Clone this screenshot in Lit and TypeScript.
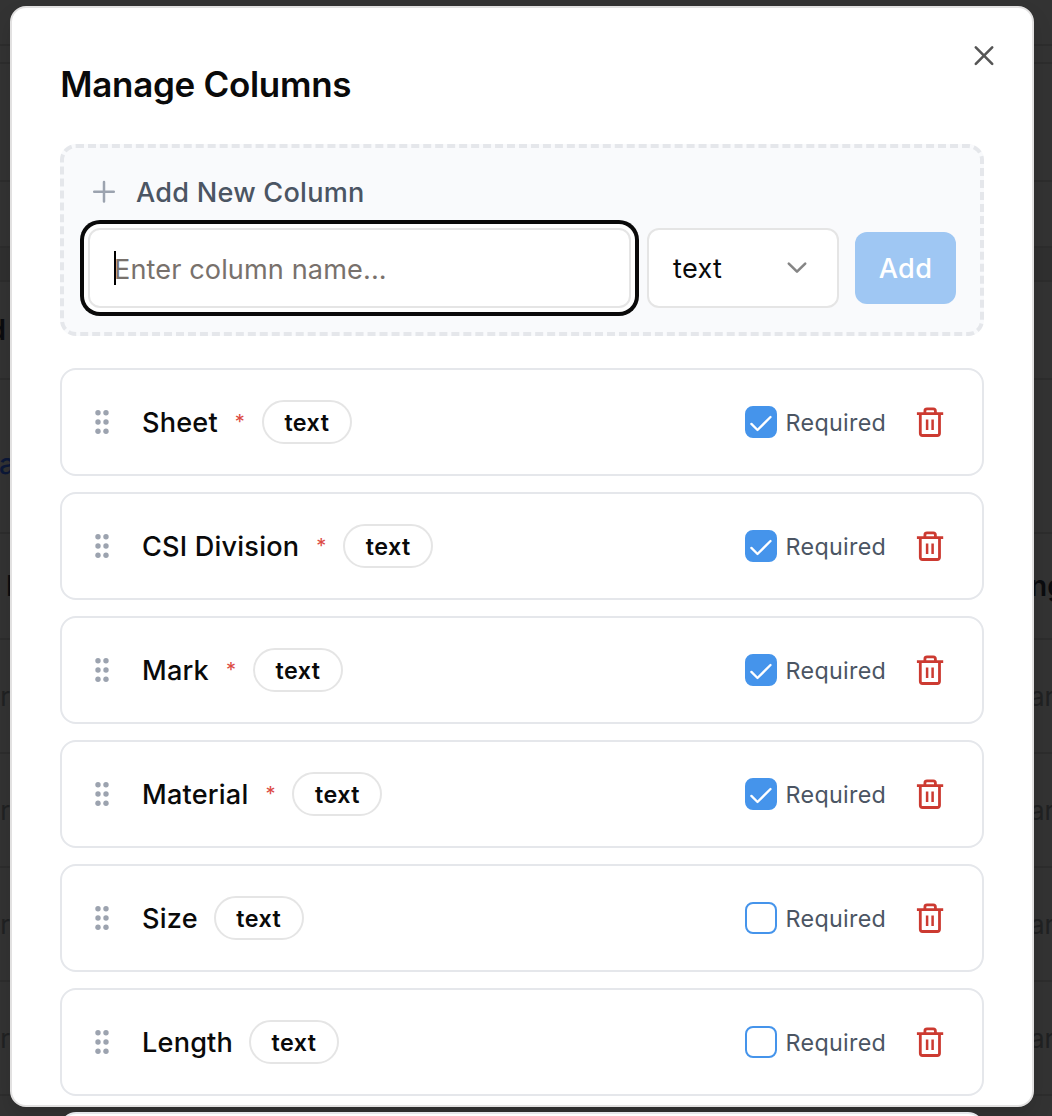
import { LitElement, html, css, svg, nothing } from "lit";
import { customElement, property, state } from "lit/decorators.js";

interface Column {
  name: string;
  type: string;
  required: boolean;
}

const plusIcon = svg`<svg width="32" height="32" viewBox="0 0 32 32" fill="none" stroke="currentColor" stroke-width="2.5" stroke-linecap="round"><path d="M6.2 15.7H25.8M16 6V25.5"/></svg>`;
const closeIcon = svg`<svg width="32" height="32" viewBox="0 0 32 32" fill="none" stroke="currentColor" stroke-width="2.6" stroke-linecap="round"><path d="M7.8 7.4L24.2 23.8M24.2 7.4L7.8 23.8"/></svg>`;
const chevronIcon = svg`<svg width="32" height="32" viewBox="0 0 32 32" fill="none" stroke="currentColor" stroke-width="2.6" stroke-linecap="round" stroke-linejoin="round"><path d="M7.8 11.6L16 19.6L24.2 11.6"/></svg>`;
const checkIcon = svg`<svg width="32" height="32" viewBox="0 0 32 32" fill="none" stroke="currentColor" stroke-width="2.3" stroke-linecap="round" stroke-linejoin="round"><path d="M6.4 17.9L12.5 24L25.5 11"/></svg>`;
const gripIcon = svg`<svg width="32" height="32" viewBox="0 0 32 32" fill="currentColor"><circle cx="12" cy="6.7" r="2.7"/><circle cx="20" cy="6.7" r="2.7"/><circle cx="12" cy="16" r="2.7"/><circle cx="20" cy="16" r="2.7"/><circle cx="12" cy="25.3" r="2.7"/><circle cx="20" cy="25.3" r="2.7"/></svg>`;
const trashIcon = svg`<svg width="32" height="32" viewBox="0 0 32 32" fill="none" stroke="currentColor" stroke-width="2.8"><path d="M2.9 7.7H29.2M10.9 7.7V4.9Q10.9 2.8 13 2.8H19.3Q21.4 2.8 21.4 4.9V7.7M6.3 7.7V27.2Q6.3 29.5 8.6 29.5H23.2Q25.5 29.5 25.5 27.2V7.7"/><path stroke-width="2.5" d="M13.1 13.4V24M18.6 13.4V24"/></svg>`;

@customElement("column-row")
class ColumnRow extends LitElement {
  @property({ attribute: false }) column!: Column;

  static styles = css`
    :host { display: block; }
    .row {
      box-sizing: border-box;
      height: 108px;
      display: flex;
      align-items: center;
      padding: 0 24px;
      border: 2px solid #e5e7eb;
      border-radius: 16px;
      background: #fff;
    }
    svg { display: block; }
    .grip { color: #9ca3af; margin-right: 24px; }
    .info { flex: 1; display: flex; align-items: center; gap: 16px; }
    .name { font-size: 27.1px; font-weight: 500; line-height: 40px; color: #0a0a0a; letter-spacing: 0.2px; padding-top: 1px; }
    .star { width: 12px; font-size: 20px; line-height: 32px; color: #dc4a43; text-align: center; }
    .badge {
      box-sizing: border-box;
      width: 90px;
      height: 44px;
      display: flex;
      align-items: center;
      justify-content: center;
      border: 2px solid #e5e5e5;
      border-radius: 22px;
      font-size: 23.3px;
      letter-spacing: 0.45px;
      font-weight: 600;
      color: #0a0a0a;
    }
    .required { display: flex; align-items: center; gap: 8px; margin-right: 16px; }
    .label { box-sizing: border-box; width: 101px; padding: 2px 0 0 0.6px; font-size: 23.3px; letter-spacing: 0.3px; line-height: 32px; color: #4b5563; white-space: nowrap; }
    .box {
      box-sizing: border-box;
      width: 32px;
      height: 32px;
      border: 2px solid #4594eb;
      border-radius: 8px;
      color: #fff;
    }
    .checked { background: #4594eb; }
    .box svg { margin: -2px; }
    .remove { width: 56px; display: flex; justify-content: center; color: #cc3a31; }
  `;

  render() {
    const c = this.column;
    return html`<div class="row">
      <span class="grip">${gripIcon}</span>
      <div class="info">
        <span class="name">${c.name}</span>
        ${c.required ? html`<span class="star">*</span>` : nothing}
        <span class="badge">${c.type}</span>
      </div>
      <div class="required">
        <span class="box ${c.required ? "checked" : ""}">${c.required ? checkIcon : nothing}</span>
        <span class="label">Required</span>
      </div>
      <span class="remove">${trashIcon}</span>
    </div>`;
  }
}

@customElement("app-root")
class AppRoot extends LitElement {
  @state() private columns: Column[] = [
    { name: "Sheet", type: "text", required: true },
    { name: "CSI Division", type: "text", required: true },
    { name: "Mark", type: "text", required: true },
    { name: "Material", type: "text", required: true },
    { name: "Size", type: "text", required: false },
    { name: "Length", type: "text", required: false },
    { name: "", type: "", required: false },
  ];

  static styles = css`
    :host {
      display: block;
      position: relative;
      box-sizing: border-box;
      width: 1052px;
      height: 1116px;
      padding: 5.5px 18px 0 10px;
      overflow: hidden;
      background: #333;
      font-family: Inter, "Liberation Sans", sans-serif;
    }
    svg { display: block; }
    .backdrop { position: absolute; inset: 0; overflow: hidden; font-size: 26px; }
    .line {
      box-sizing: border-box;
      display: flex;
      align-items: center;
      justify-content: space-between;
      border-bottom: 2px solid #2d2d2d;
      color: #202122;
      white-space: nowrap;
    }
    .h46 { height: 46px; }
    .h18 { height: 18px; }
    .h118 { height: 118px; }
    .h66 { height: 66px; }
    .h34 { height: 34px; background: #303030; }
    .h98 { height: 98px; }
    .h154 { height: 154px; }
    .h106 { height: 106px; }
    .h114 { height: 114px; }
    .left { width: 10px; display: flex; justify-content: flex-end; }
    .clip5 { width: 6px; }
    .right { width: 20px; display: flex; justify-content: flex-start; }
    .right span { margin-left: -2px; }
    .strong { font-size: 28px; font-weight: 600; color: #0b0c0f; }
    .link { padding-top: 16px; font-size: 28px; color: #0c1838; font-weight: 500; }
    .link span { margin-right: -5px; }
    .cut { margin-right: -17px; }
    .dialog {
      position: relative;
      box-sizing: border-box;
      height: 1101.5px;
      padding: 0 48px;
      border: 2px solid #e2e1e1;
      border-radius: 16px;
      background: #fff;
      box-shadow: 0 10px 20px rgba(0, 0, 0, 0.12);
    }
    .close { position: absolute; top: 32.5px; right: 32px; color: #555; }
    .title {
      margin: 0;
      padding: 58.5px 0 0 0.3px;
      height: 78px;
      font-size: 35px;
      line-height: 36px;
      font-weight: 600;
      color: #0a0a0a;
      letter-spacing: -0.3px;
    }
    .adder {
      box-sizing: border-box;
      height: 192px;
      padding: 24px;
      border: 4px dashed #e5e7eb;
      border-radius: 16px;
      background: #f9fafc;
    }
    .heading { display: flex; align-items: center; gap: 16px; height: 40px; color: #9ca3af; }
    .heading-text { font-size: 27.1px; letter-spacing: 0.25px; padding-top: 1px; line-height: 40px; font-weight: 480; color: #4b5563; }
    .controls { display: flex; align-items: center; gap: 16px; margin-top: 16px; }
    .field {
      box-sizing: border-box;
      height: 80px;
      display: flex;
      align-items: center;
      padding: 0 24px;
      border: 2px solid #e5e5e5;
      border-radius: 12px;
      background: #fff;
      font-size: 27.1px;
      letter-spacing: 0.12px;
    }
    .input { flex: 1; color: #78716c; box-shadow: 0 0 0 4px #fff, 0 0 0 8px #0a0a0a; }
    .placeholder { padding-top: 3px; }
    .caret { width: 2px; height: 34px; margin-right: -2px; background: #000; }
    .select { width: 192px; justify-content: space-between; color: #0a0a0a; }
    .value { padding-top: 1px; letter-spacing: 0.3px; }
    .chevron { color: #858585; }
    .add {
      box-sizing: border-box;
      width: 101px;
      height: 72px;
      padding-top: 1px;
      display: flex;
      align-items: center;
      justify-content: center;
      border-radius: 12px;
      background: #9fc7f3;
      color: #fff;
      font-size: 27.1px;
      letter-spacing: 0.3px;
      font-weight: 460;
    }
    .list { display: flex; flex-direction: column; gap: 16px; margin-top: 32px; }
  `;

  private renderBackdrop() {
    return html`<div class="backdrop">
      <div class="line h46"></div>
      <div class="line h18"></div>
      <div class="line h118"></div>
      <div class="line h66"></div>
      <div class="line h34"></div>
      <div class="line h98 strong"><span class="left clip5"><span>d</span></span></div>
      <div class="line h154 link"><span class="left"><span class="cut">a</span></span></div>
      <div class="line h106 strong">
        <span class="left"><span class="cut">H</span></span><span class="right"><span>ng</span></span>
      </div>
      ${[0, 1, 2, 3].map(
        () => html`<div class="line h114">
          <span class="left"><span>ar</span></span><span class="right"><span>ar</span></span>
        </div>`,
      )}
    </div>`;
  }

  render() {
    return html`
      ${this.renderBackdrop()}
      <div class="dialog">
        <span class="close">${closeIcon}</span>
        <h2 class="title">Manage Columns</h2>
        <div class="adder">
          <div class="heading">${plusIcon}<span class="heading-text">Add New Column</span></div>
          <div class="controls">
            <div class="field input"><span class="caret"></span><span class="placeholder">Enter column name...</span></div>
            <div class="field select"><span class="value">text</span><span class="chevron">${chevronIcon}</span></div>
            <div class="add">Add</div>
          </div>
        </div>
        <div class="list">
          ${this.columns.map((c) => html`<column-row .column=${c}></column-row>`)}
        </div>
      </div>
    `;
  }
}
